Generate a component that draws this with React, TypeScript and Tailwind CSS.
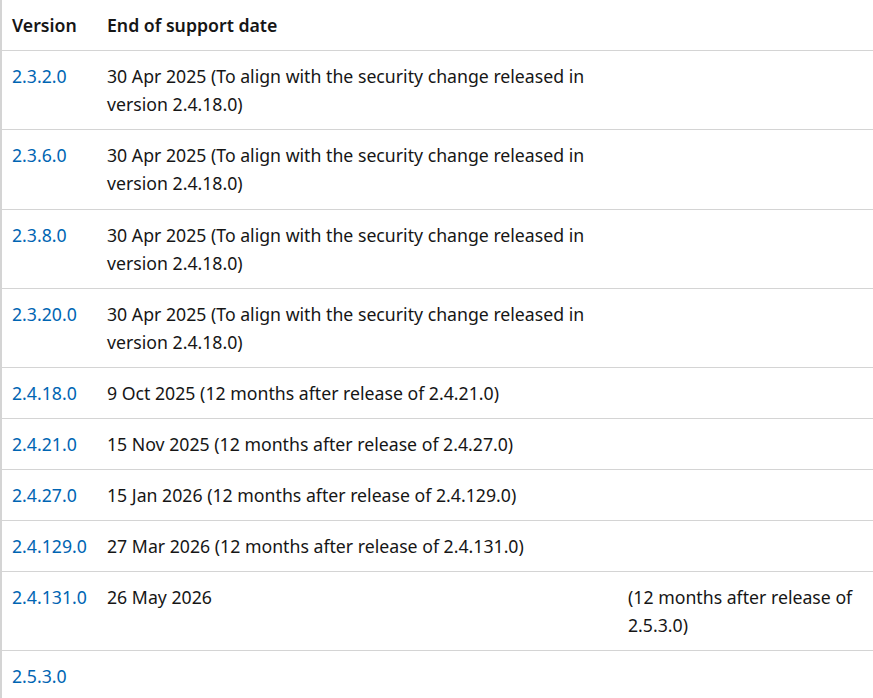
import React from "react";

type Row = { v: string; lines: string[]; extra?: string[] };

const rows: Row[] = [
  { v: "2.3.2.0", lines: ["30 Apr 2025 (To align with the security change released in", "version 2.4.18.0)"] },
  { v: "2.3.6.0", lines: ["30 Apr 2025 (To align with the security change released in", "version 2.4.18.0)"] },
  { v: "2.3.8.0", lines: ["30 Apr 2025 (To align with the security change released in", "version 2.4.18.0)"] },
  { v: "2.3.20.0", lines: ["30 Apr 2025 (To align with the security change released in", "version 2.4.18.0)"] },
  { v: "2.4.18.0", lines: ["9 Oct 2025 (12 months after release of 2.4.21.0)"] },
  { v: "2.4.21.0", lines: ["15 Nov 2025 (12 months after release of 2.4.27.0)"] },
  { v: "2.4.27.0", lines: ["15 Jan 2026 (12 months after release of 2.4.129.0)"] },
  { v: "2.4.129.0", lines: ["27 Mar 2026 (12 months after release of 2.4.131.0)"] },
  { v: "2.4.131.0", lines: ["26 May 2026"], extra: ["(12 months after release of", "2.5.3.0)"] },
  { v: "2.5.3.0", lines: [] },
];

export default function App() {
  return (
    <div
      className="w-[873px] h-[698px] overflow-hidden bg-white text-[#161616] text-[17.7px] leading-[28px]"
      style={{ fontFamily: '"Noto Sans", "Open Sans", Arial, sans-serif' }}
    >
      <table className="table-fixed border-collapse w-[900px] border-l-2 border-[#d4d4d4]">
        <colgroup>
          <col className="w-[94px]" />
          <col className="w-[521px]" />
          <col className="w-[285px]" />
        </colgroup>
        <thead>
          <tr className="border-b border-[#d4d4d4]">
            <th className="text-left font-semibold pl-[10px] pr-1 py-[11px] align-top whitespace-nowrap">Version</th>
            <th className="text-left font-semibold pl-[12px] pr-2 py-[11px] align-top whitespace-nowrap">End of support date</th>
            <th />
          </tr>
        </thead>
        <tbody>
          {rows.map((r) => {
            const double = r.lines.length > 1 || (r.extra?.length ?? 0) > 1;
            return (
              <tr key={r.v} className={`border-b border-[#d4d4d4] ${double ? "h-[79.25px]" : "h-[51px]"}`}>
                <td className="pl-[10px] pr-1 py-[11px] align-top whitespace-nowrap">
                  <a href="#" className="block text-[#0065b3]">{r.v}</a>
                </td>
                <td className="pl-[12px] pr-2 py-[11px] align-top whitespace-nowrap">
                  {r.lines.map((l, i) => (
                    <div key={i}>{l}</div>
                  ))}
                </td>
                <td className="pl-[12px] pr-2 py-[11px] align-top whitespace-nowrap">
                  {r.extra?.map((l, i) => (
                    <div key={i}>{l}</div>
                  ))}
                </td>
              </tr>
            );
          })}
        </tbody>
      </table>
    </div>
  );
}
